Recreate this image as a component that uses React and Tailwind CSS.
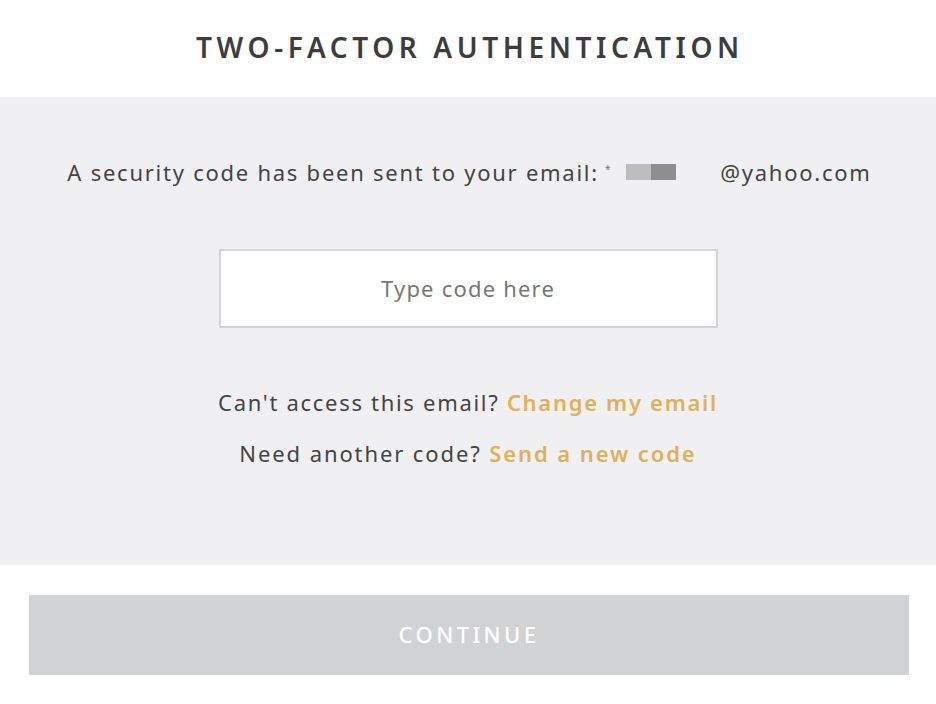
export default function App() {
  const font = { fontFamily: '"Noto Sans", "Liberation Sans", sans-serif' };
  return (
    <div className="w-[936px] h-[704px] bg-white" style={font}>
      <div className="h-[97px] flex items-center justify-center">
        <h1 className="text-[28px] font-semibold tracking-[4.6px] text-[#3d3d3d] ml-[4px] -mt-[3px]">TWO-FACTOR AUTHENTICATION</h1>
      </div>
      <div className="h-[468px] bg-[#f0f0f2] flex flex-col items-center">
        <div className="mt-[59px] h-[32px] flex items-center text-[22px] text-[#444] tracking-[1.75px] ml-[3px]">
          <span>A security code has been sent to your email:</span>
          <span className="ml-[6px] text-[10px] text-[#777] self-start mt-[6px]">*</span>
          <span className="ml-[14px] w-[25px] h-[16px] bg-[#bdbdbd]"></span>
          <span className="w-[25px] h-[16px] bg-[#8e8e8e]"></span>
          <span className="ml-[44px]">@yahoo.com</span>
        </div>
        <div className="mt-[61px] w-[499px] h-[79px] border-2 border-[#d4d4d6] bg-white flex items-center justify-center">
          <span className="text-[22px] text-[#777] tracking-[1.2px]">Type code here</span>
        </div>
        <div className="mt-[58px] text-[22px] text-[#444] tracking-[1.7px]">
          Can't access this email? <span className="text-[#e0b05a] font-semibold">Change my email</span>
        </div>
        <div className="mt-[18px] text-[22px] text-[#444] tracking-[1.9px]">
          Need another code? <span className="text-[#e0b05a] font-semibold">Send a new code</span>
        </div>
      </div>
      <div className="ml-[29px] mr-[27px] pt-[30px]">
        <div className="h-[80px] bg-[#d1d2d4] flex items-center justify-center">
          <span className="text-white text-[22px] font-medium tracking-[3.4px] -mt-[2px]">CONTINUE</span>
        </div>
      </div>
    </div>
  );
}
